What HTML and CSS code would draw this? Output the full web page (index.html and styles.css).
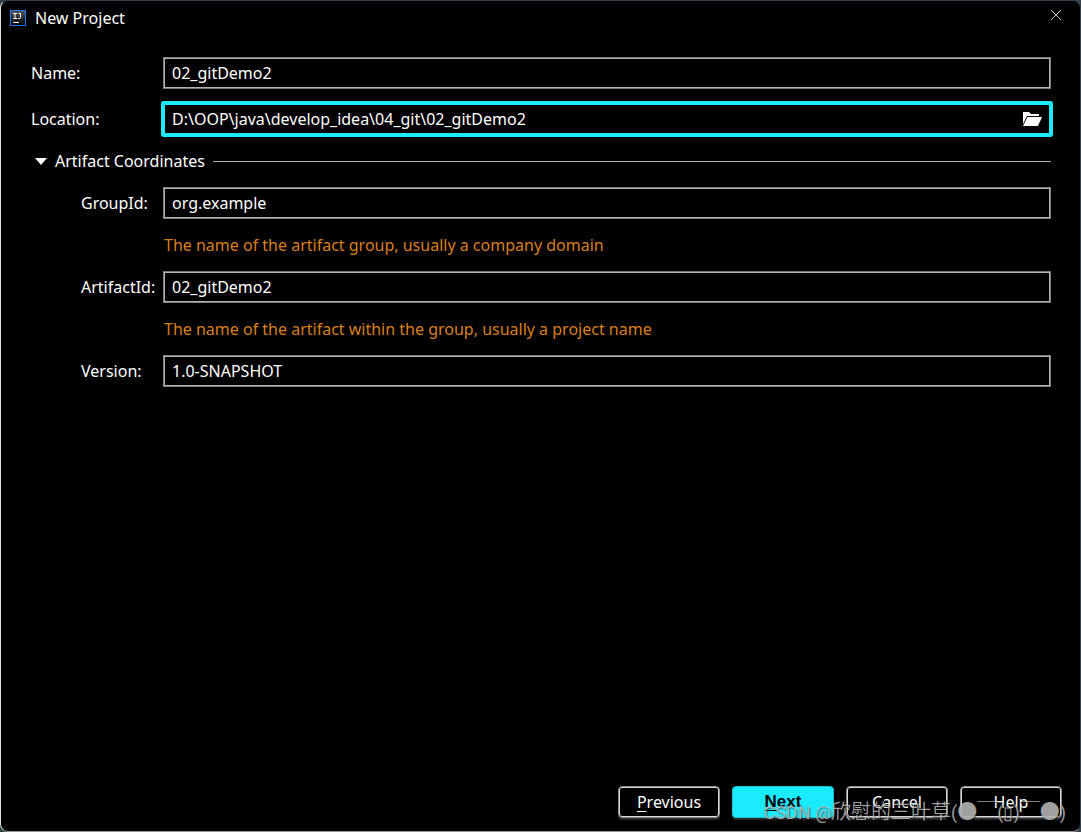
FILE: index.html
```html
<!DOCTYPE html>
<html lang="en">

<head>
  <meta charset="UTF-8">
  <meta name="viewport" content="width=device-width, initial-scale=1.0">
  <title>New Project</title>
  <link rel="stylesheet" href="styles.css">
</head>

<body>
  <div class="dialog">
    <header class="titlebar">
      <svg class="logo" viewBox="0 0 16 16" width="16" height="16">
        <defs>
          <linearGradient id="logo-bg" x1="0" y1="0" x2="0" y2="1">
            <stop offset="0" stop-color="#555" />
            <stop offset="1" stop-color="#000" />
          </linearGradient>
        </defs>
        <rect x="0.5" y="0.5" width="15" height="15" fill="url(#logo-bg)" stroke="#1a78ff" />
        <path d="M3 3.500h4M5 3.500v5M3 8.500h4M8.500 3.500h2v4q0 1-1 1H8" fill="none" stroke="#fff" />
        <path d="M3 12.500h6" stroke="#fff" />
      </svg>
      <h1>New Project</h1>
      <button class="close" type="button" aria-label="Close">
        <svg viewBox="0 0 10 10" width="10" height="10">
          <path d="M0 0L10 10M10 0L0 10" stroke="#c8c8c8" />
        </svg>
      </button>
    </header>

    <form class="form" id="project">
      <div class="row">
        <label for="name">Name:</label>
        <input id="name" type="text" value="02_gitDemo2">
      </div>
      <div class="row">
        <label for="location">Location:</label>
        <div class="path">
          <input id="location" type="text" value="D:\OOP\java\develop_idea\04_git\02_gitDemo2">
          <button class="browse" type="button" aria-label="Browse">
            <svg viewBox="0 0 20 16" width="20" height="16">
              <path d="M1 13V1h6l2 2h8v2H5L1 13z" fill="#fff" />
              <path d="M5.500 6H20l-4 9H1z" fill="#fff" />
            </svg>
          </button>
        </div>
      </div>

      <details open>
        <summary>
          <svg class="arrow" viewBox="0 0 12 7" width="12" height="7">
            <path d="M0 0h12L6 7z" fill="#fff" />
          </svg>
          <span>Artifact Coordinates</span>
        </summary>
        <div class="coordinates">
          <div class="row">
            <label for="group">GroupId:</label>
            <input id="group" type="text" value="org.example">
          </div>
          <p class="hint">The name of the artifact group, usually a company domain</p>
          <div class="row">
            <label for="artifact">ArtifactId:</label>
            <input id="artifact" type="text" value="02_gitDemo2">
          </div>
          <p class="hint">The name of the artifact within the group, usually a project name</p>
          <div class="row">
            <label for="version">Version:</label>
            <input id="version" type="text" value="1.0-SNAPSHOT">
          </div>
        </div>
      </details>
    </form>

    <footer class="buttons">
      <button type="button"><u>P</u>revious</button>
      <button class="primary" type="submit" form="project"><u>N</u>ext</button>
      <button type="button">Cancel</button>
      <button type="button">Help</button>
    </footer>

    <div class="watermark"><span>CSDN @</span>欣慰的三叶草<span>(</span>●￣<span>(▯)</span>￣●<span>)</span></div>
  </div>
</body>

</html>
```

FILE: styles.css
```css
* {
  box-sizing: border-box;
  margin: 0;
  padding: 0;
}

body {
  background: #33434d;
  color: #fff;
  font: 16px/24px "Noto Sans", "Noto Sans CJK SC", sans-serif;
}

input,
button {
  background: none;
  border: none;
  color: inherit;
  font: inherit;
}

.dialog {
  position: relative;
  display: flex;
  flex-direction: column;
  min-height: 100vh;
  background: #000;
  border: 1px solid #33434d;
  border-left-color: #dcdcdc;
  border-bottom-color: #999;
  border-radius: 8px;
}

.titlebar {
  display: flex;
  align-items: center;
  height: 34px;
  padding: 0 13px 0 9px;
}

.titlebar h1 {
  flex: 1;
  margin-left: 9px;
  font-size: 16px;
  font-weight: 400;
}

.close {
  display: flex;
  padding: 6px;
  margin-bottom: 6px;
}

.form {
  flex: 1;
  padding: 22px 29px 0 30px;
}

.row {
  display: flex;
  align-items: center;
  margin-bottom: 14px;
}

.row label {
  flex: 0 0 132px;
}

.row input {
  flex: 1;
  min-width: 0;
  height: 32px;
  padding: 0 8px;
  border: 1px solid #7c7c7c;
  box-shadow: inset 0 0 0 1px #b4b4b4;
  outline: none;
}

.path {
  display: flex;
  flex: 1;
  align-items: center;
  height: 32px;
  border: 2px solid #1aebff;
  border-radius: 1px;
  box-shadow: 0 0 0 2px #1aebff;
}

.row .path input {
  height: 28px;
  padding: 0 7px;
  border: none;
  box-shadow: none;
}

.browse {
  display: flex;
  padding: 0 7px;
}

summary {
  display: flex;
  align-items: center;
  margin-bottom: 14px;
  padding-left: 4px;
  list-style: none;
}

summary::after {
  content: "";
  flex: 1;
  height: 1px;
  margin-left: 8px;
  background: #b4b4b4;
}

.arrow {
  margin-right: 8px;
}

.coordinates {
  padding-left: 50px;
}

.coordinates label {
  flex-basis: 82px;
}

.hint {
  margin: 0 0 14px 83px;
  color: #d97f1a;
}

.buttons {
  display: flex;
  justify-content: flex-end;
  gap: 12px;
  padding: 0 18px 13px;
}

.buttons button {
  width: 102px;
  height: 32px;
  border: 1px solid #8c8c8c;
  border-radius: 4px;
  box-shadow: inset 0 0 0 1px #d8d8d8, 0 2px 1px #2a2a2a;
}

.buttons u {
  text-underline-offset: 3px;
}

.buttons .primary {
  background: #1aebff;
  border-color: #17c4d6;
  box-shadow: 0 2px 1px #2a2a2a;
  color: #000;
  font-family: "Liberation Sans", sans-serif;
  font-size: 17px;
  font-weight: 700;
}

.watermark {
  position: absolute;
  right: 14px;
  bottom: 3px;
  color: rgba(190, 190, 190, 0.85);
  font: 350 20px/30px "Noto Sans CJK SC", sans-serif;
  text-shadow: 1px 1px 1px rgba(0, 0, 0, 0.5);
  white-space: nowrap;
  pointer-events: none;
}

.watermark span {
  font: 400 18px/30px Roboto, "Noto Sans CJK SC", sans-serif;
}
```
